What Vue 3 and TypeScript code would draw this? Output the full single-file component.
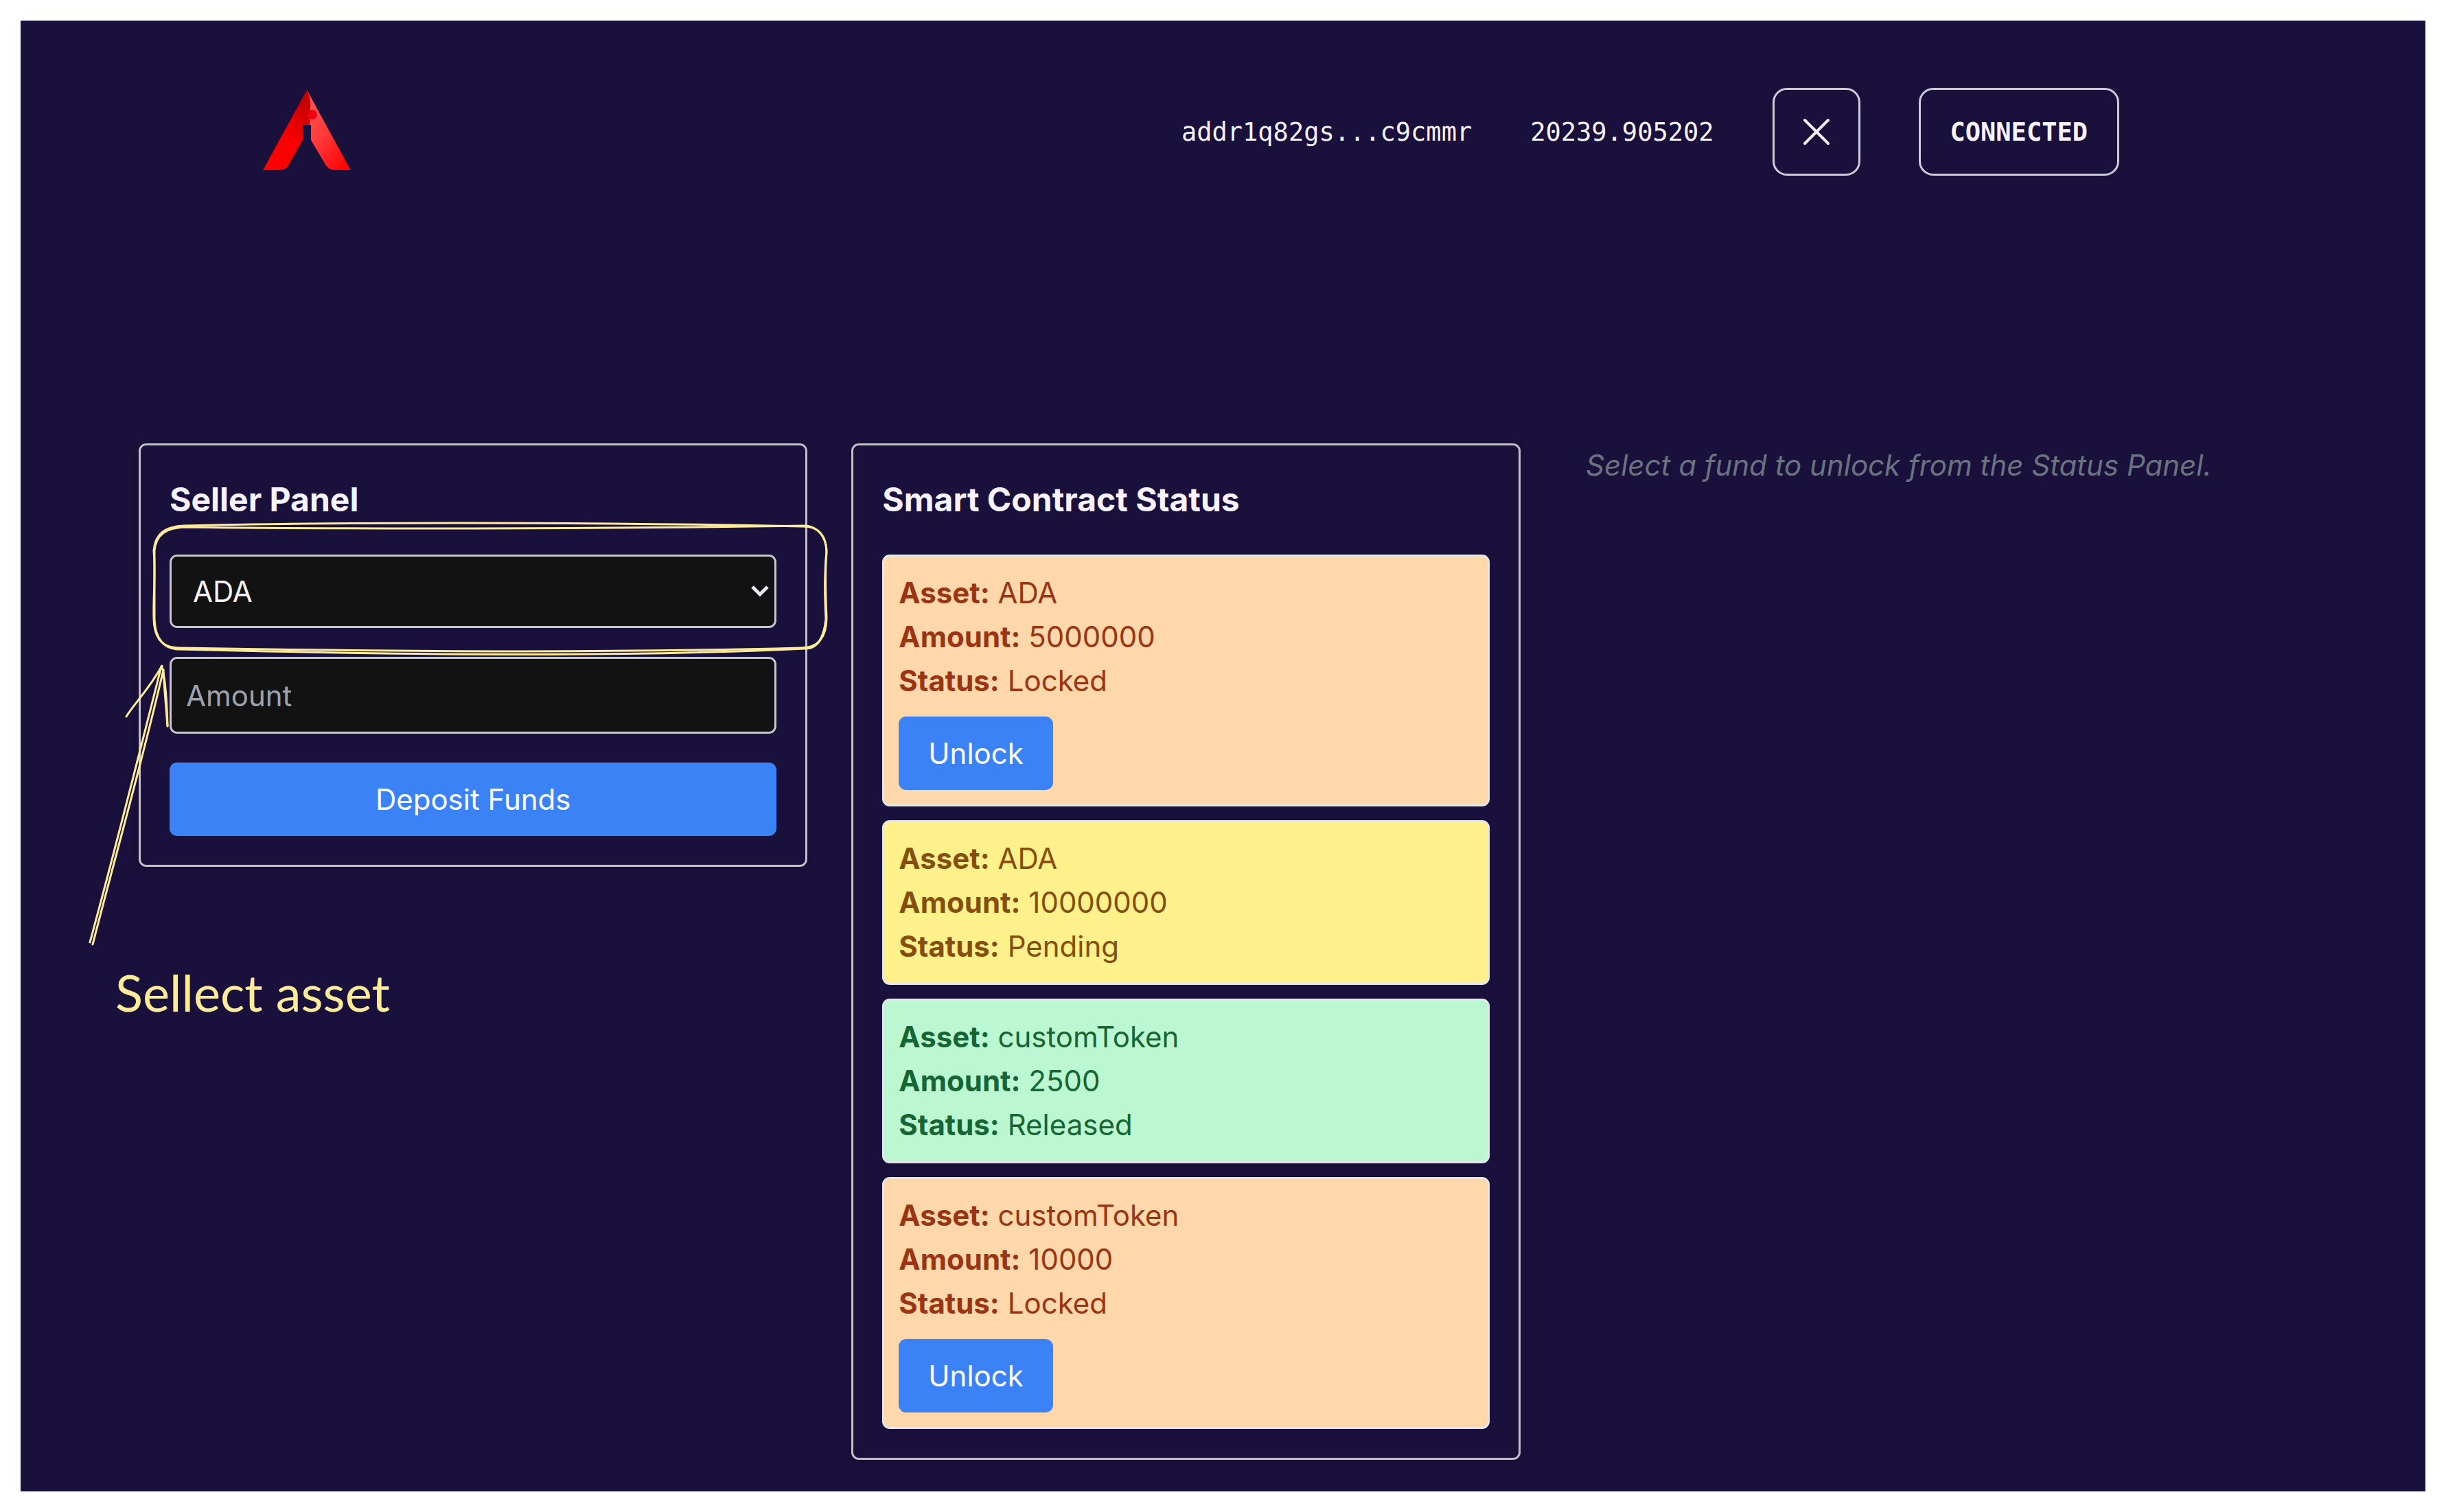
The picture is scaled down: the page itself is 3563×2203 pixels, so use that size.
<script setup lang="ts">
import { ref } from 'vue'

type Status = 'Locked' | 'Pending' | 'Released'

interface Fund {
  id: number
  asset: string
  amount: number
  status: Status
}

const address = 'addr1q82gs...c9cmmr'
const balance = '20239.905202'
const assets = ['ADA', 'customToken']
const selectedAsset = ref('ADA')
const amount = ref('')

const funds: Fund[] = [
  { id: 1, asset: 'ADA', amount: 5000000, status: 'Locked' },
  { id: 2, asset: 'ADA', amount: 10000000, status: 'Pending' },
  { id: 3, asset: 'customToken', amount: 2500, status: 'Released' },
  { id: 4, asset: 'customToken', amount: 10000, status: 'Locked' },
]
</script>

<template>
  <div class="page">
    <header class="header">
      <a class="logo" href="#" aria-label="Home">
        <svg width="128" height="128" viewBox="383 128 128 128" aria-hidden="true">
          <defs>
            <linearGradient id="legLeft" x1="0.8" y1="0" x2="0.3" y2="1">
              <stop offset="0" stop-color="#bd0000" />
              <stop offset="0.6" stop-color="#fa0000" />
              <stop offset="1" stop-color="#ff0000" />
            </linearGradient>
            <linearGradient id="legRight" x1="0.1" y1="0" x2="0.8" y2="1">
              <stop offset="0" stop-color="#ff5555" />
              <stop offset="0.5" stop-color="#ff3a3a" />
              <stop offset="1" stop-color="#ff0404" />
            </linearGradient>
          </defs>
          <path fill="url(#legRight)" d="M447 131 L511 248 H489 C481 248 476 244 473 238 L453 204 V182 H447 Z" />
          <path fill="url(#legLeft)" d="M447 131 C451 140 453 148 452 158 L451 182 H441 V204 L422 238 C419 244 414 248 406 248 H383 Z" />
          <circle cx="455" cy="167" r="7" fill="#ee0014" />
        </svg>
      </a>
      <div class="wallet">
        <span>{{ address }}</span>
        <span>{{ balance }}</span>
        <button type="button" class="outline square" aria-label="Disconnect">
          <svg width="40" height="40" viewBox="0 0 40 40" aria-hidden="true">
            <path d="M3 3 L37 37 M37 3 L3 37" fill="none" stroke="#f1eff7" stroke-width="4" stroke-linecap="round" />
          </svg>
        </button>
        <button type="button" class="outline wide">CONNECTED</button>
      </div>
    </header>

    <main class="columns">
      <div class="seller">
        <section class="panel">
          <h2>Seller Panel</h2>
          <form class="form" @submit.prevent>
            <div class="select-wrap">
              <select v-model="selectedAsset" aria-label="Asset">
                <option v-for="name in assets" :key="name" :value="name">{{ name }}</option>
              </select>
              <svg class="chevron" width="28" height="20" viewBox="0 0 28 20" aria-hidden="true">
                <path d="M3 4 L14 15 L25 4" fill="none" stroke="#e9e7ee" stroke-width="5" />
              </svg>
            </div>
            <input v-model="amount" type="text" placeholder="Amount" aria-label="Amount" />
            <button type="submit" class="primary">Deposit Funds</button>
          </form>
        </section>

        <svg class="sketch" width="1100" height="760" viewBox="123 646 1100 760" aria-hidden="true">
          <g fill="none" stroke="#ffec99" stroke-width="3" stroke-linecap="round">
            <path d="M268 766 C480 761 840 760 1170 767 C1192 767 1204 780 1204 806 C1201 840 1203 870 1204 900 C1204 928 1192 944 1167 944 C900 951 620 950 261 944 C236 944 224 930 224 900 C223 870 227 840 224 802 C226 778 240 767 268 766" />
            <path d="M268 768 C500 771 850 771 1174 766 C1192 768 1203 782 1204 802 C1201 840 1201 860 1203 902 C1200 930 1190 946 1172 945 C960 955 700 957 261 946 C240 946 226 932 225 902 C225 870 225 850 225 802 C227 780 240 770 268 768" />
            <path d="M131 1373 C163 1255 200 1110 235 971" />
            <path d="M135 1376 C170 1240 207 1110 238 976" />
            <path d="M184 1044 C196 1024 216 1006 236 970" />
            <path d="M236 972 C241 990 243 1020 244 1058" />
            <path d="M238 976 C239 1000 242 1030 244 1058" />
          </g>
        </svg>
        <span class="note">Sellect asset</span>
      </div>

      <section class="panel">
        <h2>Smart Contract Status</h2>
        <ul class="funds">
          <li v-for="fund in funds" :key="fund.id" class="fund" :class="fund.status.toLowerCase()">
            <p><strong>Asset:</strong> {{ fund.asset }}</p>
            <p><strong>Amount:</strong> {{ fund.amount }}</p>
            <p><strong>Status:</strong> {{ fund.status }}</p>
            <button v-if="fund.status === 'Locked'" type="button" class="primary unlock">Unlock</button>
          </li>
        </ul>
      </section>

      <p class="hint">Select a fund to unlock from the Status Panel.</p>
    </main>
  </div>
</template>

<style>
body {
  margin: 0;
  background: #fff;
}
</style>

<style scoped>
* {
  box-sizing: border-box;
}

.page {
  margin: 30px;
  min-height: calc(100vh - 60px);
  padding: 98px 280px 44px 172px;
  background: #1a103c;
  color: #f6f3fc;
  font: 400 42px/64px Inter, sans-serif;
  display: flow-root;
}

h2,
p,
ul {
  margin: 0;
  padding: 0;
}

button,
input,
select {
  font: inherit;
  color: inherit;
  margin: 0;
}

.header {
  display: flex;
  align-items: center;
  justify-content: space-between;
  padding: 0 166px 0 181px;
}

.logo,
.logo svg {
  display: block;
}

.wallet {
  display: flex;
  align-items: center;
  gap: 85px;
  font: 400 37px/53px "DejaVu Sans Mono", monospace;
}

.outline {
  display: flex;
  align-items: center;
  justify-content: center;
  height: 128px;
  border: 3px solid #cfccd8;
  border-radius: 21px;
  background: transparent;
  font-weight: 700;
}

.square {
  width: 128px;
  padding: 0;
}

.wide {
  padding: 0 43px;
}

.columns {
  display: grid;
  grid-template-columns: repeat(3, minmax(0, 1fr));
  gap: 64px;
  align-items: start;
  margin-top: 390px;
}

.seller {
  position: relative;
}

.panel {
  padding: 42px;
  border: 3px solid #c3c0cc;
  border-radius: 11px;
  box-shadow: 0 3px 8px rgba(0, 0, 0, 0.1);
}

h2 {
  margin-bottom: 43px;
  font-size: 48px;
  line-height: 74px;
  font-weight: 700;
}

.form {
  display: flex;
  flex-direction: column;
  gap: 42px;
}

.select-wrap {
  position: relative;
}

select,
input {
  display: block;
  width: 100%;
  border: 3px solid #c8c6cf;
  border-radius: 11px;
  background: #121212;
}

select {
  appearance: none;
  height: 107px;
  padding: 0 64px 0 31px;
}

input {
  height: 112px;
  padding: 0 21px;
}

input::placeholder {
  color: #9ca3af;
  opacity: 1;
}

.chevron {
  position: absolute;
  right: 10px;
  top: 43px;
  pointer-events: none;
}

.primary {
  height: 107px;
  padding: 0 43px;
  border: 0;
  border-radius: 11px;
  background: #3b82f6;
  color: #fff;
}

.sketch {
  position: absolute;
  left: -79px;
  top: 0;
  pointer-events: none;
}

.note {
  position: absolute;
  left: -34px;
  top: 760px;
  color: #ffec99;
  font: 400 74px/80px Lato, sans-serif;
  white-space: nowrap;
}

.funds {
  display: flex;
  flex-direction: column;
  gap: 20px;
  list-style: none;
}

.fund {
  padding: 21px;
  border: 3px solid #e5e7eb;
  border-radius: 11px;
}

.unlock {
  display: block;
  margin-top: 20px;
}

.locked {
  background: #fed7aa;
  color: #9a3412;
}

.pending {
  background: #fef08a;
  color: #854d0e;
}

.released {
  background: #bbf7d0;
  color: #166534;
}

.hint {
  color: #6b7280;
  font-style: italic;
  text-align: center;
}
</style>
